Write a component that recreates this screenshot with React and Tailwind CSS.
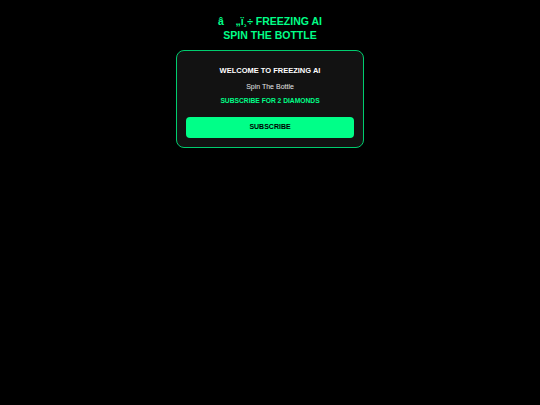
export default function App() {
  return (
    <div
      className="min-h-[405px] w-full bg-black flex flex-col items-center pt-[14px]"
      style={{ fontFamily: '"Liberation Sans", Arial, sans-serif' }}
    >
      <h1 className="text-[10.5px] font-bold leading-[14px] text-[#00ff88] text-center">
        <span className="whitespace-pre">{'â    „ï¸÷ FREEZING AI'}</span>
        <br />
        SPIN THE BOTTLE
      </h1>
      <div className="mt-[8px] w-[188px] rounded-[8px] border border-[#00cc6e] bg-[#121212] px-[9px] pt-[15px] pb-[9px] flex flex-col items-center">
        <h2 className="text-[7.5px] font-bold leading-[10px] text-white">WELCOME TO FREEZING AI</h2>
        <p className="mt-[6px] text-[7px] leading-[9px] text-[#e5e5e5]">Spin The Bottle</p>
        <p className="mt-[5px] text-[6.7px] font-bold leading-[9px] text-[#00ff88]">SUBSCRIBE FOR 2 DIAMONDS</p>
        <button className="mt-[12px] w-full h-[21px] rounded-[4px] bg-[#00ff88] text-[7px] font-bold text-black">
          SUBSCRIBE
        </button>
      </div>
    </div>
  );
}
